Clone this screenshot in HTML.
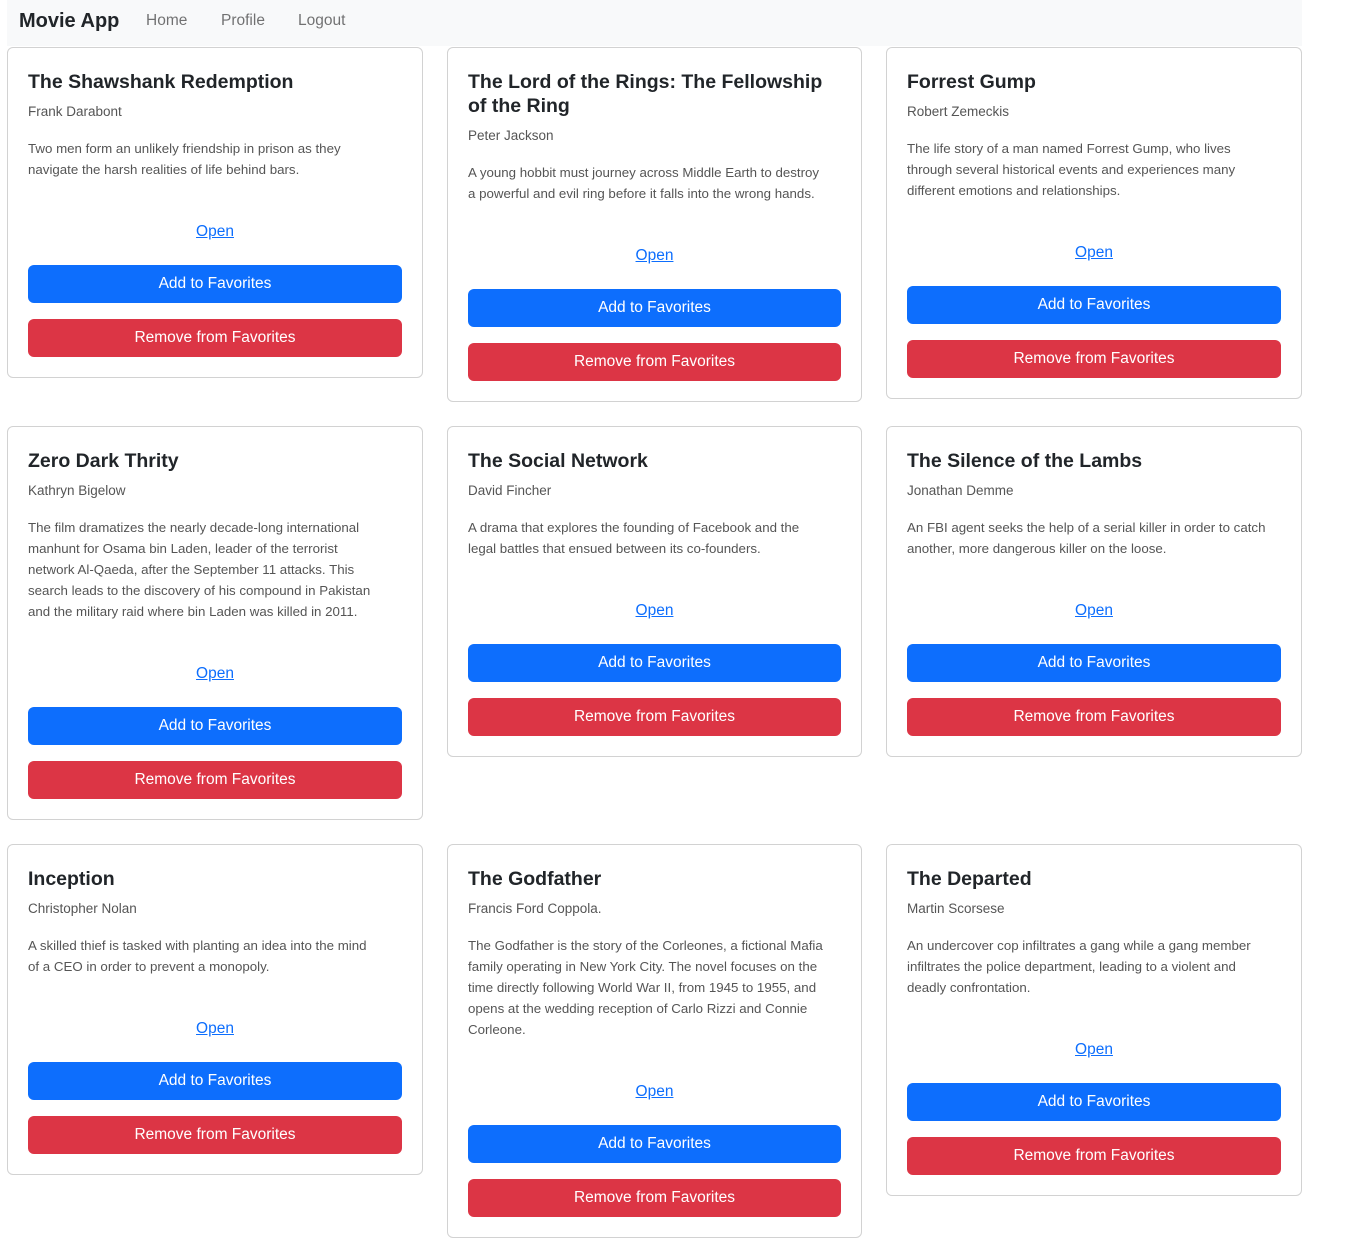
<!DOCTYPE html>
<html><head><meta charset="utf-8"><style>
*{box-sizing:border-box;margin:0;padding:0}
body{width:1364px;height:1238px;background:#fff;font-family:"Liberation Sans",sans-serif;position:relative;overflow:hidden;color:#212529}
.nav{position:absolute;left:7px;top:0;width:1295px;height:46px;background:#f8f9fa}
.brand{position:absolute;left:12px;top:10px;font-size:20px;font-weight:bold;color:#212529}
.nl{position:absolute;top:12px;font-size:15.5px;color:rgba(0,0,0,.55)}
.card{position:absolute;width:416px;border:1px solid rgba(0,0,0,.175);border-radius:6px;padding:22px 20px 20px}
.t{font-size:19.5px;line-height:24px;font-weight:bold;margin-bottom:7px;white-space:nowrap;color:#212529}
.a{font-size:13.5px;line-height:21px;color:#555;margin-bottom:16px}
.d{font-size:13.3px;line-height:21px;color:#555;white-space:nowrap}
.o{text-align:center;margin-top:40px;font-size:15.5px;line-height:24px}
.o span{color:#0d6efd;text-decoration:underline}
.b{height:38px;border-radius:6px;color:#fff;text-align:center;font-size:15.5px;line-height:38px}
.bl{background:#0d6efd;margin-top:21px}
.rd{background:#dc3545;margin-top:16px}
</style></head><body>
<div class="nav"><div class="brand">Movie App</div><div class="nl" style="left:139px">Home</div><div class="nl" style="left:214px">Profile</div><div class="nl" style="left:291px">Logout</div></div>

<div class="card" style="left:7px;top:47px"><div class="t">The Shawshank Redemption</div><div class="a">Frank Darabont</div><div class="d">Two men form an unlikely friendship in prison as they<br>navigate the harsh realities of life behind bars.</div><div class="o"><span>Open</span></div><div class="b bl">Add to Favorites</div><div class="b rd">Remove from Favorites</div></div>

<div class="card" style="left:447px;top:47px;width:415px"><div class="t">The Lord of the Rings: The Fellowship<br>of the Ring</div><div class="a">Peter Jackson</div><div class="d">A young hobbit must journey across Middle Earth to destroy<br>a powerful and evil ring before it falls into the wrong hands.</div><div class="o"><span>Open</span></div><div class="b bl">Add to Favorites</div><div class="b rd">Remove from Favorites</div></div>

<div class="card" style="left:886px;top:47px"><div class="t">Forrest Gump</div><div class="a">Robert Zemeckis</div><div class="d">The life story of a man named Forrest Gump, who lives<br>through several historical events and experiences many<br>different emotions and relationships.</div><div class="o"><span>Open</span></div><div class="b bl">Add to Favorites</div><div class="b rd">Remove from Favorites</div></div>

<div class="card" style="left:7px;top:426px"><div class="t">Zero Dark Thrity</div><div class="a">Kathryn Bigelow</div><div class="d">The film dramatizes the nearly decade-long international<br>manhunt for Osama bin Laden, leader of the terrorist<br>network Al-Qaeda, after the September 11 attacks. This<br>search leads to the discovery of his compound in Pakistan<br>and the military raid where bin Laden was killed in 2011.</div><div class="o"><span>Open</span></div><div class="b bl">Add to Favorites</div><div class="b rd">Remove from Favorites</div></div>

<div class="card" style="left:447px;top:426px;width:415px"><div class="t">The Social Network</div><div class="a">David Fincher</div><div class="d">A drama that explores the founding of Facebook and the<br>legal battles that ensued between its co-founders.</div><div class="o"><span>Open</span></div><div class="b bl">Add to Favorites</div><div class="b rd">Remove from Favorites</div></div>

<div class="card" style="left:886px;top:426px"><div class="t">The Silence of the Lambs</div><div class="a">Jonathan Demme</div><div class="d">An FBI agent seeks the help of a serial killer in order to catch<br>another, more dangerous killer on the loose.</div><div class="o"><span>Open</span></div><div class="b bl">Add to Favorites</div><div class="b rd">Remove from Favorites</div></div>

<div class="card" style="left:7px;top:844px"><div class="t">Inception</div><div class="a">Christopher Nolan</div><div class="d">A skilled thief is tasked with planting an idea into the mind<br>of a CEO in order to prevent a monopoly.</div><div class="o"><span>Open</span></div><div class="b bl">Add to Favorites</div><div class="b rd">Remove from Favorites</div></div>

<div class="card" style="left:447px;top:844px;width:415px"><div class="t">The Godfather</div><div class="a">Francis Ford Coppola.</div><div class="d">The Godfather is the story of the Corleones, a fictional Mafia<br>family operating in New York City. The novel focuses on the<br>time directly following World War II, from 1945 to 1955, and<br>opens at the wedding reception of Carlo Rizzi and Connie<br>Corleone.</div><div class="o"><span>Open</span></div><div class="b bl">Add to Favorites</div><div class="b rd">Remove from Favorites</div></div>

<div class="card" style="left:886px;top:844px"><div class="t">The Departed</div><div class="a">Martin Scorsese</div><div class="d">An undercover cop infiltrates a gang while a gang member<br>infiltrates the police department, leading to a violent and<br>deadly confrontation.</div><div class="o"><span>Open</span></div><div class="b bl">Add to Favorites</div><div class="b rd">Remove from Favorites</div></div>
</body></html>
